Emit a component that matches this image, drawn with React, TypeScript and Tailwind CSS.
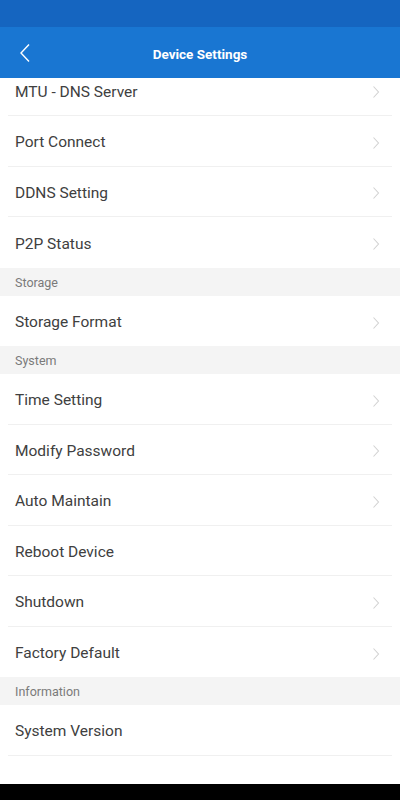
const sections = [
  {
    title: null,
    items: [
      { label: "MTU - DNS Server", arrow: true },
      { label: "Port Connect", arrow: true },
      { label: "DDNS Setting", arrow: true },
      { label: "P2P Status", arrow: true },
    ],
  },
  {
    title: "Storage",
    items: [{ label: "Storage Format", arrow: true }],
  },
  {
    title: "System",
    items: [
      { label: "Time Setting", arrow: true },
      { label: "Modify Password", arrow: true },
      { label: "Auto Maintain", arrow: true },
      { label: "Reboot Device", arrow: false },
      { label: "Shutdown", arrow: true },
      { label: "Factory Default", arrow: true },
    ],
  },
  {
    title: "Information",
    items: [{ label: "System Version", arrow: false }],
  },
];

const Chevron = () => (
  <svg width="8" height="14" viewBox="0 0 8 14" fill="none">
    <path d="M1.5 1.5 L6.5 7 L1.5 12.5" stroke="#d2d2d2" strokeWidth="1.1" />
  </svg>
);

const App = () => {
  return (
    <div
      className="w-[400px] h-[800px] flex flex-col bg-white overflow-hidden"
      style={{ fontFamily: "Roboto, 'Noto Sans', sans-serif" }}
    >
      <div className="h-[27px] bg-[#1565c0] shrink-0" />
      <div className="h-[51px] bg-[#1976d2] shrink-0 flex items-center relative">
        <div className="pl-[19px] pt-[1px] flex items-center">
          <svg width="12" height="20" viewBox="0 0 12 20" fill="none">
            <path d="M10 1.5 L2 10 L10 18.5" stroke="white" strokeWidth="1.4" />
          </svg>
        </div>
        <div className="absolute inset-0 pt-[3px] flex items-center justify-center text-white font-bold text-[13.5px]">
          Device Settings
        </div>
      </div>

      <div className="flex-1 overflow-hidden">
        <div className="-mt-[12.5px]">
          {sections.map((s, i) => (
            <div key={i}>
              {s.title && (
                <div className="h-[28px] bg-[#f4f4f4] flex items-center pt-[3px] px-[15px] text-[12.5px] text-[#7a7a7a]">
                  {s.title}
                </div>
              )}
              {s.items.map((it, j) => (
                <div key={j} className="h-[50.5px] px-[8px]">
                  <div
                    className={
                      "h-full flex items-center justify-between pl-[7px] pr-[12px] pt-[4px] " +
                      (j < s.items.length - 1 || i === sections.length - 1 ? "border-b border-[#f0f0f0]" : "")
                    }
                  >
                    <span className="text-[15.5px] text-[#404040]">{it.label}</span>
                    {it.arrow && <Chevron />}
                  </div>
                </div>
              ))}
            </div>
          ))}
        </div>
      </div>

      <div className="h-[16px] bg-black shrink-0" />
    </div>
  );
};

export default App;
